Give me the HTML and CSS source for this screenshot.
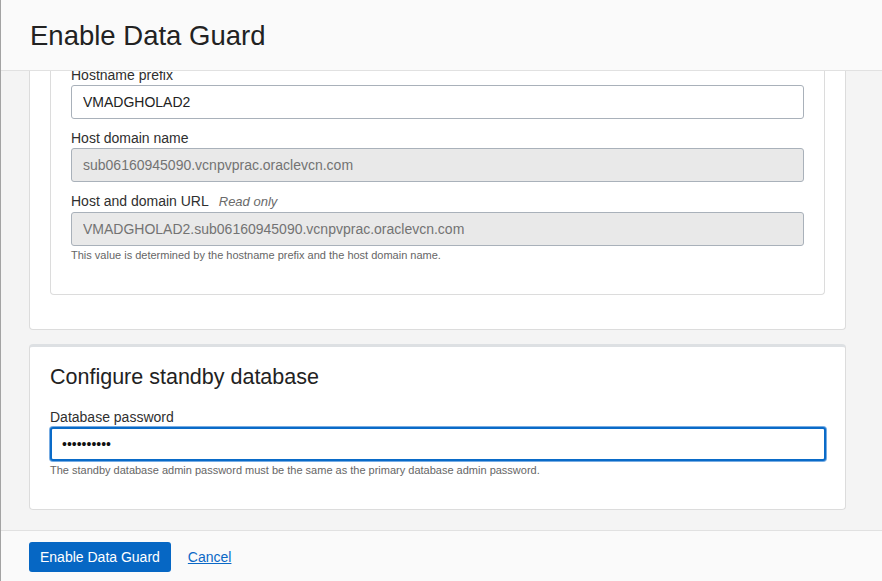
FILE: index.html
```html
<!DOCTYPE html>
<html lang="en">
<head>
<meta charset="utf-8">
<title>Enable Data Guard</title>
<link rel="stylesheet" href="styles.css">
</head>
<body>
<div class="panel">
  <header class="panel-header">
    <h1 class="panel-title">Enable Data Guard</h1>
  </header>
  <main class="panel-body">
    <section class="card card-cut">
      <div class="subcard">
        <div class="field field-first">
          <label class="field-label">Hostname prefix</label>
          <input class="text-input" type="text" value="VMADGHOLAD2">
        </div>
        <div class="field">
          <label class="field-label">Host domain name</label>
          <input class="text-input is-readonly" type="text" value="sub06160945090.vcnpvprac.oraclevcn.com" readonly>
        </div>
        <div class="field">
          <label class="field-label">Host and domain URL<span class="label-tag">Read only</span></label>
          <input class="text-input is-readonly" type="text" value="VMADGHOLAD2.sub06160945090.vcnpvprac.oraclevcn.com" readonly>
          <p class="help-text">This value is determined by the hostname prefix and the host domain name.</p>
        </div>
      </div>
    </section>
    <section class="card card-standby">
      <h2 class="card-title">Configure standby database</h2>
      <div class="field">
        <label class="field-label">Database password</label>
        <input class="text-input is-focused" type="password" value="abcdefghij">
        <p class="help-text">The standby database admin password must be the same as the primary database admin password.</p>
      </div>
    </section>
  </main>
  <footer class="panel-footer">
    <button class="btn-primary" type="button">Enable Data Guard</button>
    <a class="link-cancel" href="#">Cancel</a>
  </footer>
</div>
</body>
</html>
```
FILE: styles.css
```css
* { box-sizing: border-box; }
html, body {
  margin: 0;
  padding: 0;
  width: 882px;
  height: 581px;
  overflow: hidden;
  background: #f4f4f4;
  font-family: "Liberation Sans", Arial, Helvetica, sans-serif;
  color: #2f2f2f;
}
.panel {
  display: flex;
  flex-direction: column;
  height: 581px;
  border-left: 1px solid #a3a3a3;
}
.panel-header {
  flex: 0 0 71px;
  background: #fafafa;
  border-bottom: 1px solid #e1e1e1;
  padding: 20px 0 0 29px;
}
.panel-title {
  margin: 0;
  font-size: 27.5px;
  line-height: 32px;
  font-weight: normal;
  color: #222;
}
.panel-body {
  flex: 1 1 auto;
  overflow: hidden;
  background: #f4f4f4;
  padding: 0 36px 0 28px;
}
.card {
  background: #fff;
  border: 1px solid #dcdcdc;
  border-radius: 4px;
  padding: 0 19px 31px 20px;
}
.card-cut {
  border-top: none;
  border-radius: 0 0 4px 4px;
  padding: 0 20px 34px 20px;
}
.subcard {
  border: 1px solid #dcdcdc;
  border-top: none;
  border-radius: 0 0 4px 4px;
  padding: 0 20px 32px 20px;
}
.card-standby {
  margin-top: 14px;
  border-top: 3px solid #dde0e3;
  padding-top: 18px;
  padding-bottom: 32px;
}
.card-title {
  margin: 0 0 20px 0;
  font-size: 21.5px;
  line-height: 24px;
  font-weight: normal;
  color: #222;
}
.field { margin-top: 11px; }
.field-first { margin-top: -4px; }
.card-standby .field { margin-top: 0; }
.field-label {
  display: block;
  font-size: 14px;
  line-height: 16px;
  margin-bottom: 2px;
  color: #2f2f2f;
}
.label-tag {
  font-style: italic;
  font-size: 13px;
  color: #6a6a6a;
  margin-left: 10px;
}
.text-input {
  display: block;
  width: 100%;
  height: 34px;
  margin: 0;
  padding: 0 11px;
  border: 1px solid #a9b1ba;
  border-radius: 3px;
  background: #fff;
  font-family: "Liberation Sans", Arial, Helvetica, sans-serif;
  font-size: 14px;
  color: #222;
  outline: none;
}
.text-input.is-readonly {
  background: #e9e9e9;
  color: #737373;
}
.text-input.is-focused {
  border: 2px solid #0a6bc8;
  padding: 0 10px;
  box-shadow: 0 0 0 1px rgba(74, 144, 217, 0.75);
  color: #111;
}
.help-text {
  margin: 3px 0 0 0;
  font-size: 11px;
  line-height: 13px;
  color: #666;
}
.panel-footer {
  flex: 0 0 51px;
  background: #fafafa;
  border-top: 1px solid #e1e1e1;
  padding: 11px 0 0 28px;
  display: flex;
  align-items: flex-start;
  gap: 17px;
}
.btn-primary {
  height: 30px;
  padding: 0 11px;
  border: none;
  border-radius: 3px;
  background: #0667c4;
  color: #fff;
  font-family: "Liberation Sans", Arial, Helvetica, sans-serif;
  font-size: 14px;
  line-height: 30px;
  cursor: pointer;
}
.link-cancel {
  font-size: 14px;
  line-height: 30px;
  color: #0a68c6;
  text-decoration: underline;
}
```
